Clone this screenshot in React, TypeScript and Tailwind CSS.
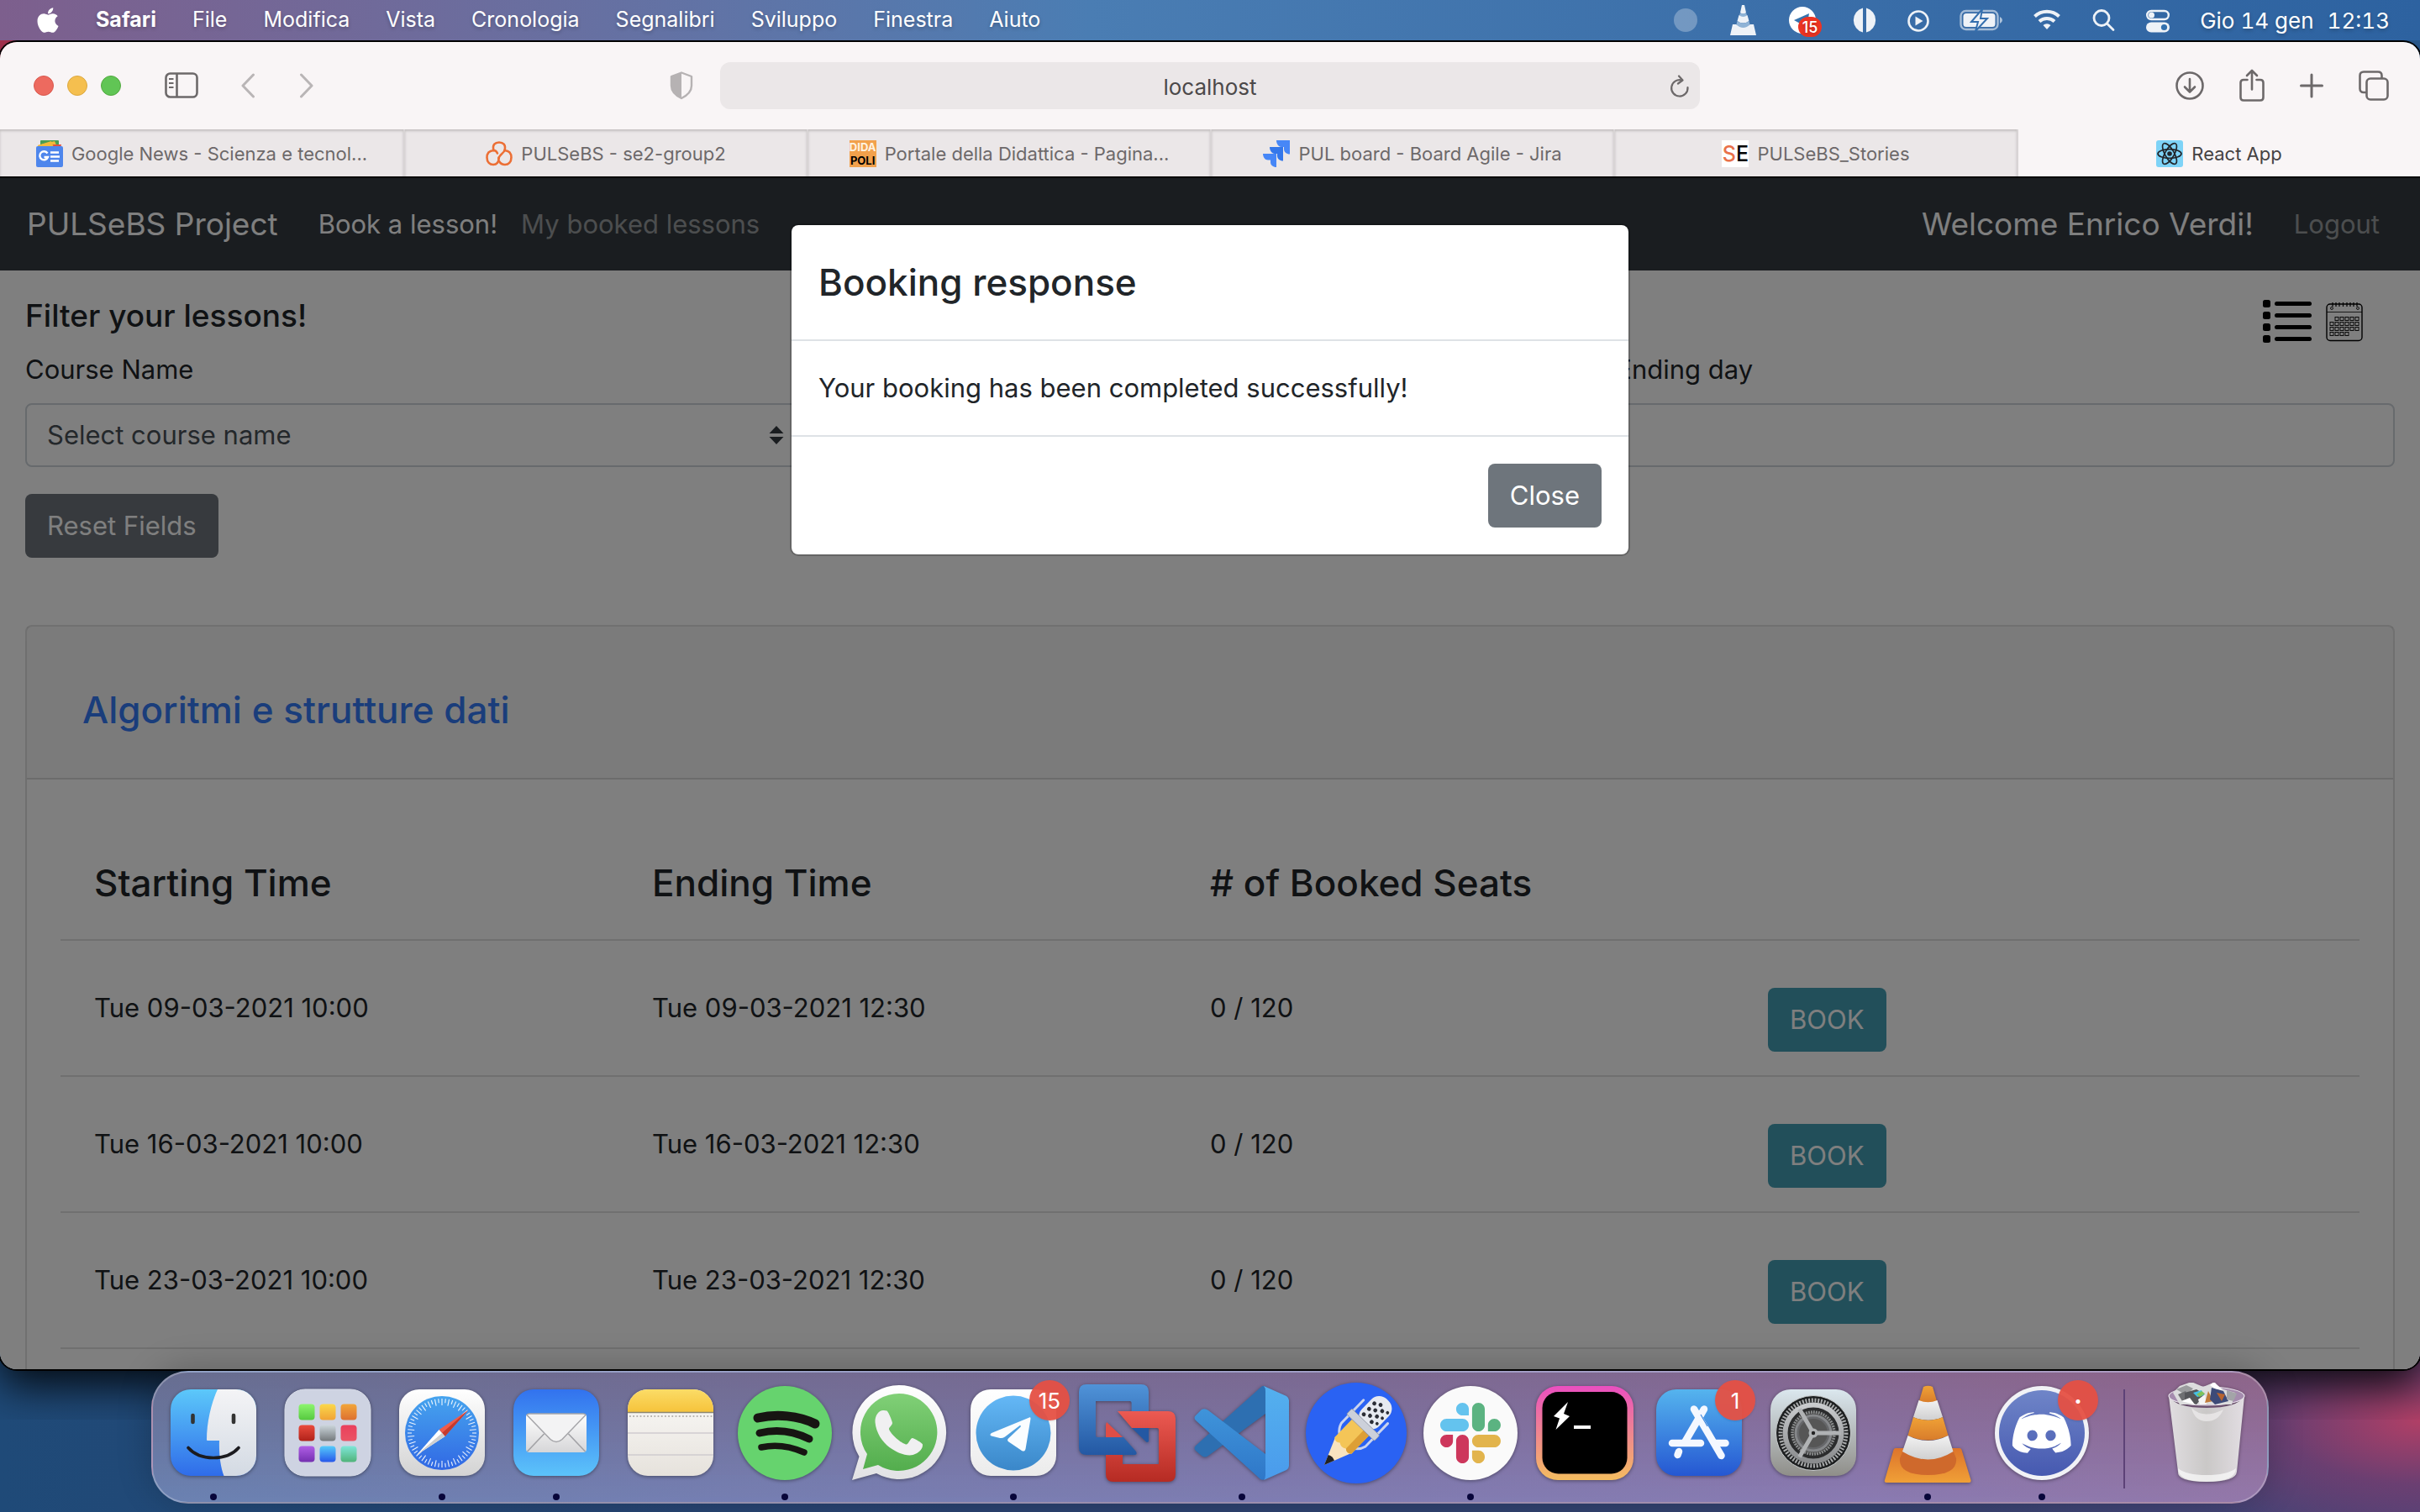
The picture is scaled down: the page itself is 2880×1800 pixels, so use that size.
import React from "react";
import { FaApple } from "react-icons/fa";

type Box = { className?: string };

/* ------------------------------------------------------------------ */
/* Menu bar                                                            */
/* ------------------------------------------------------------------ */

const MENU = ["File", "Modifica", "Vista", "Cronologia", "Segnalibri", "Sviluppo", "Finestra", "Aiuto"];

function StatusIcons() {
  return (
    <div className="flex items-center gap-9">
      <svg width="28" height="48" viewBox="0 0 28 48">
        <ellipse cx="14" cy="24" rx="14" ry="14" fill="#fff" opacity="0.28" />
      </svg>
      <svg width="36" height="48" viewBox="0 0 36 48">
        <path d="M17 6h3l2 9q-3.500 3-7 0z" fill="#eef2f7" />
        <path d="M15 15q3.500 3 7 0l1.500 5q-5 5-10 0z" fill="#8fb3d6" />
        <path d="M13.500 18q5 4 10 0l2 7q-7 5-14 0z" fill="#eef2f7" />
        <path d="M11.500 25q7 5 14 0l1.500 6q-8.500 6-17 0z" fill="#8fb3d6" />
        <path d="M6 29h4q8.500 8 17 0h4l3 13H3z" fill="#eef2f7" />
      </svg>
      <span className="relative flex">
        <svg width="40" height="48" viewBox="0 0 40 48">
          <circle cx="17" cy="24" r="16" fill="#fff" />
          <path d="M7 24l18-8-3 18-6-5z" fill="#3573ae" />
        </svg>
        <span className="absolute top-5 left-3 flex h-6 w-7 items-center justify-center rounded-full bg-[#ee3423] text-[18px] font-medium">15</span>
      </span>
      <svg width="30" height="48" viewBox="0 0 30 48">
        <path d="M13 9.500a15 15 0 0 0 0 29zM17 9.500a15 15 0 0 1 0 29z" fill="#eef2f7" />
      </svg>
      <svg width="26" height="48" viewBox="0 0 26 48">
        <circle cx="13" cy="25" r="11.500" fill="none" stroke="#eef2f7" strokeWidth="2.600" />
        <path d="M9.500 19.500v11l9-5.500z" fill="#eef2f7" />
      </svg>
      <svg width="52" height="48" viewBox="0 0 52 48">
        <rect x="1.500" y="13" width="44" height="22" rx="6" fill="none" stroke="#fff" strokeOpacity="0.55" strokeWidth="2.400" />
        <path d="M48 20q3 1.500 3 4t-3 4z" fill="#fff" opacity="0.6" />
        <rect x="4.500" y="16" width="38" height="16" rx="3.500" fill="#eef2f7" />
        <path d="M27 11L14 26h8l-3 11 14-15h-8z" fill="#eef2f7" stroke="#346fae" strokeWidth="2" />
      </svg>
      <svg width="32" height="48" viewBox="0 0 32 48" fill="none" stroke="#eef2f7" strokeWidth="4">
        <path d="M1.500 19.500a21 21 0 0 1 29 0" />
        <path d="M7 25.500a13 13 0 0 1 18 0" />
        <path d="M16 35l-4.500-5a6.500 6.500 0 0 1 9 0z" fill="#eef2f7" stroke="none" />
      </svg>
      <svg width="30" height="48" viewBox="0 0 30 48" fill="none" stroke="#eef2f7" strokeWidth="2.800" strokeLinecap="round">
        <circle cx="13" cy="21.500" r="9" />
        <path d="M20 28.500l7 7" />
      </svg>
      <svg width="28" height="48" viewBox="0 0 28 48">
        <rect x="1.200" y="13" width="25.600" height="10" rx="5" fill="none" stroke="#eef2f7" strokeWidth="2.400" />
        <circle cx="6.500" cy="18" r="3.500" fill="#eef2f7" />
        <rect x="0" y="26.500" width="28" height="12" rx="6" fill="#eef2f7" />
        <circle cx="21.500" cy="32.500" r="3.600" fill="#3270ae" />
      </svg>
    </div>
  );
}

function MenuBar() {
  return (
    <header className="flex h-12 shrink-0 items-center bg-linear-to-r from-[#7d5f8d] via-[#4a7db3] via-45% to-[#2d62a0] pr-9 pl-10 text-[25px] text-white [text-shadow:0_2px_4px_rgba(0,0,0,0.25)]">
      <FaApple size={34} className="mr-10" />
      <nav className="flex items-center gap-[43px]">
        <b className="font-bold">Safari</b>
        {MENU.map((m) => (
          <span key={m}>{m}</span>
        ))}
      </nav>
      <div className="ml-auto flex items-center gap-9">
        <StatusIcons />
        <span className="flex gap-4 text-[26px] tabular-nums">
          <span>Gio 14 gen</span>
          <span>12:13</span>
        </span>
      </div>
    </header>
  );
}

/* ------------------------------------------------------------------ */
/* Browser chrome                                                      */
/* ------------------------------------------------------------------ */

function Toolbar() {
  return (
    <div className="grid h-[104px] shrink-0 grid-cols-[1fr_1166px_1fr] items-center bg-[#f9f5f6] text-[#6d696a]">
      <div className="flex items-center pr-8 pl-10">
        <div className="flex gap-4">
          <button aria-label="Chiudi" className="size-6 rounded-full border border-[#d9584e] bg-[#ed6a5f]" />
          <button aria-label="Riduci" className="size-6 rounded-full border border-[#dca83f] bg-[#f5bf4f]" />
          <button aria-label="Ingrandisci" className="size-6 rounded-full border border-[#52a93f] bg-[#61c555]" />
        </div>
        <button aria-label="Barra laterale" className="ml-[52px]">
          <svg width="40" height="32" viewBox="0 0 40 32" fill="none" stroke="currentColor" strokeWidth="2.600">
            <rect x="1.500" y="1.500" width="37" height="28" rx="5" />
            <path d="M14.500 1.500v28" />
            <path d="M5 8h5.500M5 13h5.500M5 18h5.500" strokeWidth="2" />
          </svg>
        </button>
        <button aria-label="Indietro" className="ml-[50px] text-[#b9b5b6]">
          <svg width="18" height="30" viewBox="0 0 18 30" fill="none" stroke="currentColor" strokeWidth="3" strokeLinecap="round" strokeLinejoin="round">
            <path d="M15.500 2L3 15l12.500 13" />
          </svg>
        </button>
        <button aria-label="Avanti" className="ml-[52px] text-[#b9b5b6]">
          <svg width="18" height="30" viewBox="0 0 18 30" fill="none" stroke="currentColor" strokeWidth="3" strokeLinecap="round" strokeLinejoin="round">
            <path d="M2.500 2L15 15 2.500 28" />
          </svg>
        </button>
        <button aria-label="Privacy" className="ml-auto text-[#b6b2b3]">
          <svg width="28" height="34" viewBox="0 0 28 34">
            <path d="M14 1.500L26 6v11c0 7-5 11.500-12 15C7 28.500 2 24 2 17V6z" fill="none" stroke="currentColor" strokeWidth="2.400" strokeLinejoin="round" />
            <path d="M14 1.500v30.500C7 28.500 2 24 2 17V6z" fill="currentColor" />
          </svg>
        </button>
      </div>
      <div className="flex h-14 items-center rounded-xl bg-[#ebe7e8] pt-0.5 pr-3 pl-9">
        <input aria-label="Indirizzo" defaultValue="localhost" className="w-full bg-transparent text-center text-[26px] text-[#4c494a] outline-none" />
        <button aria-label="Ricarica">
          <svg width="24" height="28" viewBox="0 0 24 28" fill="none" stroke="currentColor" strokeWidth="2.200" strokeLinecap="round" strokeLinejoin="round">
            <path d="M21.500 15a9.700 9.700 0 1 1-7-8.500" />
            <path d="M11 1.500l4.500 5-5.500 4" />
          </svg>
        </button>
      </div>
      <div className="flex items-center justify-end gap-[42px] pr-[37px]">
        <button aria-label="Download">
          <svg width="34" height="36" viewBox="0 0 34 36" fill="none" stroke="currentColor" strokeWidth="2.600" strokeLinecap="round" strokeLinejoin="round">
            <circle cx="17" cy="18" r="15.500" />
            <path d="M17 10v15M11 19.500l6 6 6-6" />
          </svg>
        </button>
        <button aria-label="Condividi">
          <svg width="30" height="40" viewBox="0 0 30 40" fill="none" stroke="currentColor" strokeWidth="2.600" strokeLinecap="round" strokeLinejoin="round">
            <path d="M9.500 13H5q-3.500 0-3.500 3.500V34q0 3.500 3.500 3.500h20q3.500 0 3.500-3.500V16.500q0-3.500-3.500-3.500h-4.500" />
            <path d="M15 24.500V2.500M9 8l6-6 6 6" />
          </svg>
        </button>
        <button aria-label="Nuovo pannello">
          <svg width="28" height="30" viewBox="0 0 28 30" fill="none" stroke="currentColor" strokeWidth="3" strokeLinecap="round">
            <path d="M14 2v26M1.500 15h25" />
          </svg>
        </button>
        <button aria-label="Panoramica pannelli">
          <svg width="36" height="36" viewBox="0 0 36 36" fill="none" stroke="currentColor" strokeWidth="2.600">
            <path d="M9.500 26H6q-4.500 0-4.500-4.500V6Q1.500 1.500 6 1.500h17q4.500 0 4.500 4.500v3" />
            <rect x="9.500" y="9.500" width="25" height="25" rx="4.500" />
          </svg>
        </button>
      </div>
    </div>
  );
}

function TabIcon({ kind }: { kind: string }) {
  if (kind === "news")
    return (
      <svg width="32" height="32" viewBox="0 0 32 32">
        <rect x="5" y="0" width="22" height="12" rx="1" fill="#4a9e54" />
        <path d="M2 6l20-5 4 9H2z" fill="#f3b93b" />
        <path d="M18 5l12 0-2 8H18z" fill="#e0503e" />
        <path d="M18 1L2 6v5h20z" fill="#f3b93b" />
        <rect x="0" y="7" width="32" height="25" rx="2" fill="#4e86ec" />
        <path d="M13.500 15.500a5 5 0 1 0 .5 4.500h-4.500" fill="none" stroke="#fff" strokeWidth="2.400" />
        <path d="M17 14.500h10M17 19.500h11M17 24.500h10" stroke="#fff" strokeWidth="2.600" />
      </svg>
    );
  if (kind === "knot")
    return (
      <svg width="32" height="32" viewBox="0 0 32 32" fill="none" stroke="#ec6f35" strokeWidth="2.600" strokeLinecap="round">
        <path d="M9.500 12C7.500 5 11.500 2.500 16 2.500S24.500 5 22.500 12C21.500 15.500 16 17 15.500 22" />
        <path d="M14 15.500C13 13 11.500 12 9.500 12 4 12.500 1.500 16 1.500 20.500 1.500 26 5 29 9 29s7-3 6.500-8.500" />
        <path d="M22.500 12c5.500.5 8 4 8 8.500 0 5.500-3.500 8.500-7.500 8.500-3.500 0-5.500-1.500-7-4" />
      </svg>
    );
  if (kind === "dida")
    return (
      <span className="flex size-8 flex-col items-center justify-center overflow-hidden bg-[#f2a14c] text-[13px] leading-4 font-bold">
        <span className="text-[#fff3e2]">DIDA</span>
        <span className="text-black">POLI</span>
      </span>
    );
  if (kind === "jira")
    return (
      <svg width="32" height="32" viewBox="0 0 32 32">
        <path d="M16 0h16v16.500c-4 0-7-2.500-7-6V8h-3c-3.500 0-6-4-6-8z" fill="#4787f7" />
        <path d="M8 8h16v16.500c-4 0-7-2.500-7-6V16h-3c-3.500 0-6-4-6-8z" fill="#3477ea" />
        <path d="M0 16h16v16c-4 0-7-2.500-7-6v-2.500H6c-3.500 0-6-3.500-6-7.500z" fill="#4787f7" />
      </svg>
    );
  if (kind === "se")
    return (
      <span className="flex size-8 items-center justify-center overflow-hidden bg-white text-[25px] leading-8 font-medium">
        <span className="text-[#e9714b]">S</span>
        <span className="text-black">E</span>
      </span>
    );
  return (
    <svg width="32" height="32" viewBox="0 0 32 32">
      <rect width="32" height="32" rx="3" fill="#7ed3f7" />
      <g fill="none" stroke="#22252a" strokeWidth="1.700">
        <ellipse cx="16" cy="16" rx="14" ry="5.400" />
        <ellipse cx="16" cy="16" rx="14" ry="5.400" transform="rotate(60 16 16)" />
        <ellipse cx="16" cy="16" rx="14" ry="5.400" transform="rotate(120 16 16)" />
      </g>
      <circle cx="16" cy="16" r="2.800" fill="#22252a" />
    </svg>
  );
}

const TABS = [
  { icon: "news", title: "Google News - Scienza e tecnol..." },
  { icon: "knot", title: "PULSeBS - se2-group2" },
  { icon: "dida", title: "Portale della Didattica - Pagina..." },
  { icon: "jira", title: "PUL board - Board Agile - Jira" },
  { icon: "se", title: "PULSeBS_Stories" },
  { icon: "react", title: "React App", active: true },
];

function TabBar() {
  return (
    <div className="grid h-14 shrink-0 grid-cols-6 text-[22px]">
      {TABS.map((t) => (
        <button
          key={t.title}
          className={
            t.active
              ? "flex items-center justify-center gap-2.5 border-l-2 border-[#d8d4d5] bg-[#f9f5f6] pt-0.5 whitespace-nowrap text-[#454243]"
              : "flex items-center justify-center gap-2.5 border-l-2 border-[#d8d4d5] bg-[#ebe7e8] pt-0.5 whitespace-nowrap text-[#6d696a] shadow-[inset_0_2px_3px_#c3bfc0] first:border-l-0"
          }
        >
          <TabIcon kind={t.icon} />
          <span>{t.title}</span>
        </button>
      ))}
    </div>
  );
}

/* ------------------------------------------------------------------ */
/* Web page                                                            */
/* ------------------------------------------------------------------ */

const LESSONS = [
  { start: "Tue 09-03-2021 10:00", end: "Tue 09-03-2021 12:30", seats: "0 / 120" },
  { start: "Tue 16-03-2021 10:00", end: "Tue 16-03-2021 12:30", seats: "0 / 120" },
  { start: "Tue 23-03-2021 10:00", end: "Tue 23-03-2021 12:30", seats: "0 / 120" },
];

function ListIcon({ className }: Box) {
  return (
    <svg className={className} width="60" height="54" viewBox="0 0 60 54">
      {[0, 14, 28, 42].map((y) => (
        <g key={y}>
          <rect x="1" y={y + 1} width="9" height="9" rx="2.500" />
          <rect x="15" y={y + 3} width="44" height="5" rx="2.500" />
        </g>
      ))}
    </svg>
  );
}

const CALENDAR_DAYS = [
  [1, 2, 3, 4, 5],
  [0, 1, 2, 3, 4, 5],
  [0, 1, 2, 3, 4, 5],
  [0, 1, 2, 3],
];

function CalendarIcon() {
  return (
    <svg width="44" height="50" viewBox="0 0 44 50" fill="none" stroke="#000">
      <rect x="1" y="4" width="42" height="43.500" rx="4" strokeWidth="1.400" />
      <path d="M1 13.500h42" strokeWidth="0.800" />
      <path d="M8 2v5M12 2v5M16 2v5M20.500 2v5M25 2v5M29 2v5M33 2v5M37 2v5" strokeWidth="1.200" />
      <circle cx="7" cy="9" r="1.500" strokeWidth="0.800" />
      <circle cx="38" cy="9" r="1.500" strokeWidth="0.800" />
      {CALENDAR_DAYS.map((row, r) =>
        row.map((c) => <rect key={r + "-" + c} x={5 + c * 6} y={19.500 + r * 6} width="4" height="4" strokeWidth="0.900" />)
      )}
    </svg>
  );
}

function Field({ id, label, children }: { id: string; label?: string; children: React.ReactNode }) {
  return (
    <div className="flex flex-col justify-end gap-4">
      {label && (
        <label htmlFor={id} className="leading-[48px]">
          {label}
        </label>
      )}
      {children}
    </div>
  );
}

function PageContent() {
  return (
    <div className="flex h-full flex-col bg-white">
      <nav className="flex h-[110px] shrink-0 items-center bg-[#343a40] px-8">
        <a href="#home" className="text-[37px] text-white">
          PULSeBS Project
        </a>
        <a href="#book" className="ml-12 text-white">
          Book a lesson!
        </a>
        <a href="#booked" className="ml-7 text-white/50">
          My booked lessons
        </a>
        <span className="ml-auto text-[37px] text-white">Welcome Enrico Verdi!</span>
        <a href="#logout" className="mr-4 ml-12 text-white/50">
          Logout
        </a>
      </nav>
      <main className="flex flex-1 flex-col px-[30px] pt-[30px]">
        <div className="flex h-16 items-start justify-between">
          <h5 className="text-[37px] leading-[48px] font-medium">Filter your lessons!</h5>
          <div className="flex items-center gap-4 pt-1 pr-[38px]">
            <button aria-label="Lista">
              <ListIcon />
            </button>
            <button aria-label="Calendario">
              <CalendarIcon />
            </button>
          </div>
        </div>
        <form className="flex flex-col items-start gap-8">
          <div className="grid w-full grid-cols-3 gap-5">
            <Field id="course" label="Course Name">
              <div className="relative">
                <select id="course" className="h-[76px] w-full appearance-none rounded-lg border-2 border-[#ced4da] bg-white px-6 text-[#495057]">
                  <option>Select course name</option>
                </select>
                <svg className="pointer-events-none absolute top-[27px] right-6" width="18" height="22" viewBox="0 0 18 22" fill="#343a40">
                  <path d="M9 0l8.500 9H.5zM9 22l8.500-9H.5z" />
                </svg>
              </div>
            </Field>
            <Field id="from">
              <input id="from" type="text" aria-label="From day" className="h-[76px] rounded-lg border-2 border-[#ced4da] bg-white px-6" />
            </Field>
            <Field id="to" label="Ending day">
              <input id="to" type="text" className="h-[76px] rounded-lg border-2 border-[#ced4da] bg-white px-6" />
            </Field>
          </div>
          <button type="button" className="h-[76px] rounded-lg bg-[#6e757c] px-[26px] text-white">
            Reset Fields
          </button>
        </form>
        <section className="mt-20 flex flex-1 flex-col rounded-t-lg border-2 border-b-0 border-black/12">
          <div className="border-b-2 border-black/12 bg-black/3 pt-[70px] pr-16 pb-[52px] pl-[66px]">
            <a href="#course" className="block text-[44px] leading-[58px] font-medium text-[#347bf6]">
              Algoritmi e strutture dati
            </a>
          </div>
          <div className="px-10">
            <table className="block">
              <thead className="block">
                <tr className="grid grid-cols-4 border-b-2 border-black/12 px-10 pt-[94px] pb-[38px] text-left text-[44px] leading-[58px]">
                  <th className="font-medium">Starting Time</th>
                  <th className="font-medium">Ending Time</th>
                  <th className="font-medium"># of Booked Seats</th>
                  <th />
                </tr>
              </thead>
              <tbody className="block">
                {LESSONS.map((l) => (
                  <tr key={l.start} className="grid h-[162px] grid-cols-4 items-center border-b-2 border-black/12 px-10">
                    <td>{l.start}</td>
                    <td>{l.end}</td>
                    <td>{l.seats}</td>
                    <td className="pt-7">
                      <button className="h-[76px] rounded-lg bg-[#449fb4] px-[26px] text-white">BOOK</button>
                    </td>
                  </tr>
                ))}
              </tbody>
            </table>
          </div>
        </section>
      </main>
    </div>
  );
}

function BookingDialog() {
  return (
    <div className="absolute inset-0 flex items-start justify-center bg-black/50 pt-[54px]">
      <div role="dialog" aria-labelledby="dialog-title" className="w-[1000px] rounded-[10px] border-2 border-black/20 bg-white bg-clip-padding">
        <div className="border-b-2 border-[#dee2e6] px-8 py-8">
          <h4 id="dialog-title" className="text-[44px] leading-[72px] font-medium">
            Booking response
          </h4>
        </div>
        <p className="border-b-2 border-[#dee2e6] px-8 py-8 leading-[48px]">Your booking has been completed successfully!</p>
        <div className="flex justify-end p-8">
          <button className="h-[76px] rounded-lg bg-[#6e757c] px-[26px] text-white">Close</button>
        </div>
      </div>
    </div>
  );
}

/* ------------------------------------------------------------------ */
/* Dock                                                                */
/* ------------------------------------------------------------------ */

function Gradient({ id, from, to }: { id: string; from: string; to: string }) {
  return (
    <linearGradient id={id} x1="0" y1="0" x2="0" y2="1">
      <stop offset="0" stopColor={from} />
      <stop offset="1" stopColor={to} />
    </linearGradient>
  );
}

function Canvas({ children }: { children: React.ReactNode }) {
  return (
    <svg width="120" height="120" viewBox="0 0 120 120" className="drop-shadow-[0_1px_2px_rgba(0,0,0,0.4)]">
      {children}
    </svg>
  );
}

function Finder() {
  return (
    <Canvas>
      <defs>
        <Gradient id="fn1" from="#5cc8fa" to="#2f6ce9" />
        <Gradient id="fn2" from="#f4f4f6" to="#d3dae3" />
        <clipPath id="fnc">
          <rect x="9" y="8" width="102" height="103" rx="24" />
        </clipPath>
      </defs>
      <g clipPath="url(#fnc)">
        <rect x="9" y="8" width="102" height="103" fill="url(#fn1)" />
        <path d="M65 8C57 25 52 48 52 68q0 1 1 1h14c-.5 15 1 30 5.500 42H112V8z" fill="url(#fn2)" />
      </g>
      <path d="M35.500 39v8M84 39v8" stroke="#333" strokeWidth="4.600" strokeLinecap="round" />
      <path d="M30 77.500c14 16 46 16 60 0" fill="none" stroke="#1b1b1f" strokeWidth="3.600" strokeLinecap="round" />
    </Canvas>
  );
}

const PADS = [
  ["#8df56f", "#56c93f"],
  ["#fbd84b", "#f0a336"],
  ["#f2a63a", "#dd7030"],
  ["#ea4b3c", "#b0221a"],
  ["#ccd6dc", "#74797c"],
  ["#ea3f5c", "#ea5465"],
  ["#b05fe6", "#7430b0"],
  ["#56cbfb", "#2757ea"],
  ["#7fe6d8", "#50b37a"],
];

function Launchpad() {
  return (
    <Canvas>
      <defs>
        {PADS.map((p, i) => (
          <Gradient key={i} id={"lp" + i} from={p[0]} to={p[1]} />
        ))}
      </defs>
      <rect x="9" y="8" width="102" height="103" rx="24" fill="#ced3e2" stroke="#dadeea" strokeWidth="1" />
      {PADS.map((_, i) => (
        <rect key={i} x={25.500 + (i % 3) * 25} y={25.500 + Math.floor(i / 3) * 25} width="19" height="19" rx="4" fill={"url(#lp" + i + ")"} />
      ))}
    </Canvas>
  );
}

function SafariIcon() {
  return (
    <Canvas>
      <defs>
        <Gradient id="sf1" from="#ffffff" to="#d3d3d3" />
        <Gradient id="sf2" from="#46a4ee" to="#3168e4" />
      </defs>
      <rect x="9" y="8" width="102" height="103" rx="24" fill="url(#sf1)" />
      <circle cx="60" cy="60" r="44" fill="url(#sf2)" />
      {Array.from({ length: 60 }, (_, i) => (
        <path key={i} d={i % 2 ? "M60 19v5" : "M60 19v8"} stroke="#fff" strokeWidth="1.100" opacity="0.9" transform={"rotate(" + i * 6 + " 60 60)"} />
      ))}
      <path d="M91 33L56.500 56l7 8z" fill="#ee5c4c" />
      <path d="M91 33L60 60l3.500 4z" fill="#c43a2e" />
      <path d="M30 86l26.500-30 7 8z" fill="#fff" />
      <path d="M30 86l30-26 3.500 4z" fill="#cfcfcf" />
    </Canvas>
  );
}

function MailIcon() {
  return (
    <Canvas>
      <defs>
        <Gradient id="ml1" from="#3272ee" to="#5cc3fa" />
        <Gradient id="ml2" from="#ffffff" to="#d6d6d8" />
      </defs>
      <rect x="9" y="8" width="102" height="103" rx="24" fill="url(#ml1)" />
      <rect x="24" y="37" width="72" height="46" rx="4" fill="url(#ml2)" />
      <path d="M25.500 82l20-21M94.500 82l-20-21" stroke="#a2a2a6" strokeWidth="1.600" />
      <path d="M25 38.500l28 29q7 6 14 0l28-29q-1-1.500-3-1.500H28q-2 0-3 1.500z" fill="#f3f3f4" stroke="#a5a5a9" strokeWidth="1.500" />
    </Canvas>
  );
}

function NotesIcon() {
  return (
    <Canvas>
      <defs>
        <Gradient id="nt1" from="#fbdc67" to="#f6c33b" />
        <Gradient id="nt2" from="#fbfaf8" to="#e6e2dc" />
        <clipPath id="ntc">
          <rect x="9" y="8" width="102" height="103" rx="24" />
        </clipPath>
      </defs>
      <g clipPath="url(#ntc)">
        <rect x="9" y="8" width="102" height="103" fill="url(#nt2)" />
        <rect x="9" y="8" width="102" height="27" fill="url(#nt1)" />
        <path d="M9 35.500h102" stroke="#8d8672" strokeWidth="1.400" />
        <path d="M11 40h100" stroke="#b8b5b0" strokeWidth="1.800" strokeDasharray="1.800 2.400" />
        <path d="M9 60h102M9 86h102" stroke="#cfccd0" strokeWidth="1.500" />
      </g>
    </Canvas>
  );
}

function SpotifyIcon() {
  return (
    <Canvas>
      <circle cx="60" cy="60" r="56" fill="#66d36e" />
      <g fill="none" stroke="#171512" strokeLinecap="round">
        <path d="M28 42c22-5 48-3 68 7" strokeWidth="11" />
        <path d="M30 60c20-5 41-2 59 7" strokeWidth="9" />
        <path d="M32 77c18-4 35-1 51 6" strokeWidth="7.500" />
      </g>
    </Canvas>
  );
}

function WhatsAppIcon() {
  return (
    <Canvas>
      <defs>
        <Gradient id="wa1" from="#ffffff" to="#e1e1e4" />
        <Gradient id="wa2" from="#81d077" to="#53ad4d" />
      </defs>
      <path d="M60 3a56 56 0 1 1-27 105L4 116l8.500-28A56 56 0 0 1 60 3z" fill="url(#wa1)" />
      <path d="M60 13a46 46 0 1 1-25 85L17 103l5-18A46 46 0 0 1 60 13z" fill="url(#wa2)" />
      <path d="M42 33c-5-1-11 5-10.500 14 1 13 9 24 17 30s20 11 28 9c7-2 12-7 11.500-12.500-.5-2-9-6.500-12-7.500-2-.5-5 7-7 7.500-3 .5-17-9-21-18-.5-2 4-5 4-7.500-.5-3-4.500-13-6.500-14.500z" fill="#f0f0f1" />
    </Canvas>
  );
}

function TelegramIcon() {
  return (
    <Canvas>
      <defs>
        <Gradient id="tg1" from="#ffffff" to="#ebebeb" />
        <Gradient id="tg2" from="#64b8f6" to="#3a87c9" />
      </defs>
      <rect x="9" y="8" width="102" height="103" rx="24" fill="url(#tg1)" />
      <circle cx="60" cy="60" r="44.500" fill="url(#tg2)" />
      <path d="M79 41.500L34 60c-2 1-2 3 0 3.500l10 2.500q3 .5 6-1.500L67 51.500c1.500-1 2.500 0 1.500 1.200L54 66.500c-1.500 1.500-1 3 .5 4L70 81c2 1.200 4 .5 4.500-2L80.500 43c0-1.500-.5-2-1.500-1.500z" fill="#fafdff" />
    </Canvas>
  );
}

function FusionIcon() {
  return (
    <Canvas>
      <defs>
        <Gradient id="vm1" from="#5093d8" to="#2358a3" />
        <Gradient id="vm2" from="#ec5a52" to="#b62b23" />
      </defs>
      <path d="M48 34h60q9 0 9 9v66q0 9-9 9H43q-9 0-9-9V80h20v17h43V56q0-2-2-2H65z" fill="url(#vm2)" />
      <path d="M35 47l20 19v16H34V50z" fill="#e04e47" />
      <path d="M11 2h65q9 0 9 9v23H64.600V24q0-2-2-2H22v41q0 2 2 2h31l15 17q2 4-2 4H11q-9 0-9-9V11q0-9 9-9z" fill="url(#vm1)" />
      <path d="M65 54h20v16q-2 2-3.500 0z" fill="#2358a3" />
    </Canvas>
  );
}

function CodeIcon() {
  return (
    <Canvas>
      <defs>
        <Gradient id="vs1" from="#54b0ee" to="#4a9bec" />
        <Gradient id="vs2" from="#3f94da" to="#2f77c8" />
      </defs>
      <path d="M83 5q2-2 5 0v32L20 87q-4 3-8 0l-7-6q-3-3 0-6z" fill="#2d6fb1" />
      <path d="M12 32q4-2 8 1l68 52v29q-3 3-6 1L5 45q-3-3 0-6z" fill="url(#vs2)" />
      <path d="M86 4l27 12q3 2 3 5v78q0 3-3 5l-27 12q2-2 2-6V10q0-4-2-6z" fill="url(#vs1)" />
    </Canvas>
  );
}

function NotabilityIcon() {
  return (
    <Canvas>
      <circle cx="60" cy="60" r="60" fill="#2a62f3" />
      <g transform="translate(22 98) rotate(-46)">
        <path d="M88-20H50q-14 4-14 20t14 20h38" fill="none" stroke="#c9d3ee" strokeWidth="3" strokeLinecap="round" />
        <path d="M0 0l34-14v28z" fill="#f8e3bf" />
        <path d="M0 0l12-5q3 5 0 10z" fill="#222" />
        <path d="M32-14h36v28H32q-4-5 0-9-4-5 0-10-4-4 0-9z" fill="#f4c557" />
        <path d="M32 5h36v9H32q-4-5 0-9z" fill="#dd9f36" />
        <rect x="66" y="-14" width="42" height="29" rx="13" fill="#e6e9f0" />
        {[76, 85, 94].map((x) => (
          <g key={x} fill="#2b2d36">
            <circle cx={x} cy="-8" r="2.400" />
            <circle cx={x + 4} cy="-1.500" r="2.400" />
            <circle cx={x} cy="5" r="2.400" />
            <circle cx={x + 3} cy="11" r="1.900" />
          </g>
        ))}
        <rect x="62" y="-23" width="9" height="46" rx="1.500" fill="#ccd0da" stroke="#8e94a3" strokeWidth="0.800" />
      </g>
    </Canvas>
  );
}

function SlackIcon() {
  const dot = "M25.800 77.600c0 7.100-5.800 12.900-12.900 12.900S0 84.700 0 77.600s5.800-12.900 12.900-12.900h12.900zM32.300 77.600c0-7.100 5.800-12.900 12.900-12.900s12.900 5.800 12.900 12.900v32.300c0 7.100-5.800 12.900-12.900 12.900s-12.900-5.800-12.900-12.900z";
  return (
    <Canvas>
      <circle cx="60" cy="60" r="56" fill="#fafafa" />
      <g transform="translate(24 24) scale(0.586)">
        <path d={dot} fill="#cd375c" />
        <path d={dot} fill="#64c3ee" transform="rotate(90 61.400 61.400)" />
        <path d={dot} fill="#5bb381" transform="rotate(180 61.400 61.400)" />
        <path d={dot} fill="#e2b44c" transform="rotate(270 61.400 61.400)" />
      </g>
    </Canvas>
  );
}

function TerminalIcon() {
  return (
    <Canvas>
      <defs>
        <Gradient id="tm1" from="#ea4fc0" to="#f4bc5f" />
      </defs>
      <rect x="2" y="4" width="116" height="112" rx="26" fill="url(#tm1)" />
      <rect x="9.500" y="11" width="101" height="97.500" rx="19" fill="#000" />
      <path d="M40 23L23 40l7 2.500L25.500 56 42 40l-7-3z" fill="#fff" />
      <rect x="47" y="51" width="20" height="4" fill="#fff" />
    </Canvas>
  );
}

function AppStoreIcon() {
  return (
    <Canvas>
      <defs>
        <Gradient id="as1" from="#55b4ee" to="#2557d2" />
      </defs>
      <rect x="9" y="8" width="102" height="103" rx="24" fill="url(#as1)" />
      <g stroke="#f4f8ff" strokeWidth="8.500" strokeLinecap="round">
        <path d="M54 31.500L86.500 87" />
        <path d="M66 31.500L43 71" />
        <path d="M28 72h34" />
        <path d="M79 72h12.500" />
        <path d="M36 82l-1.500 4" />
      </g>
      <path d="M62 38l8 14" stroke="#3f87dd" strokeWidth="1.200" />
    </Canvas>
  );
}

function SettingsIcon() {
  return (
    <Canvas>
      <defs>
        <Gradient id="st1" from="#dbe7ee" to="#8f8e89" />
        <Gradient id="st2" from="#c9cbcd" to="#8a8c8e" />
      </defs>
      <rect x="9" y="8" width="102" height="103" rx="24" fill="url(#st1)" />
      <circle cx="60" cy="60" r="44.500" fill="#1d1f20" stroke="#c9cccd" strokeWidth="1" />
      <circle cx="60" cy="60" r="39" fill="none" stroke="#a9abac" strokeWidth="5" strokeDasharray="2 1.700" />
      <circle cx="60" cy="60" r="33.500" fill="#2b2c2d" stroke="url(#st2)" strokeWidth="6" />
      <circle cx="60" cy="60" r="25" fill="#444" stroke="#8c8e8f" strokeWidth="3.500" strokeDasharray="1.800 1.200" />
      <circle cx="60" cy="60" r="21" fill="#66676a" stroke="#85878a" strokeWidth="3" />
      <circle cx="60" cy="60" r="17" fill="#565656" />
      <path d="M60 60h33M60 60L43.500 31.500M60 60L43.500 88.500" stroke="#b0b2b4" strokeWidth="5" />
      <circle cx="60" cy="60" r="5.500" fill="#b0b2b4" />
      <circle cx="60" cy="60" r="2.200" fill="#222" />
    </Canvas>
  );
}

function VlcIcon() {
  return (
    <Canvas>
      <defs>
        <Gradient id="vl1" from="#dd742b" to="#f0a037" />
        <Gradient id="vl2" from="#f2f2f2" to="#cfcfd0" />
        <Gradient id="vl3" from="#f0a236" to="#d87c2b" />
      </defs>
      <path d="M22 78h76q2 0 2.500 2l11 36q.5 3-2 3H11q-3 0-2-3l10.500-36q.5-2 2.500-2z" fill="url(#vl1)" />
      <path d="M27 90q-2 20 33.500 20T94 90l-4-10H31z" fill="#cf692c" />
      <path d="M55 5q5.500-2.500 11 0l5 17q-10.500 4-21 0z" fill="url(#vl3)" />
      <path d="M49.500 21q11 4.500 22 0l6.500 20q-17.500 7.500-35 0z" fill="url(#vl2)" />
      <path d="M43 41q17.500 7.500 35 0l6.500 22q-24 11-48 0z" fill="url(#vl3)" />
      <path d="M36.500 63q24 12 48 0l6 19q-30 19-60.500 0z" fill="url(#vl2)" />
    </Canvas>
  );
}

function DiscordIcon() {
  return (
    <Canvas>
      <defs>
        <Gradient id="dc1" from="#6f85c8" to="#4659b0" />
      </defs>
      <circle cx="60" cy="60" r="56" fill="#f1f2f6" />
      <circle cx="60" cy="60" r="51" fill="url(#dc1)" />
      <g transform="translate(2 8) scale(4.800)" fill="#fff">
        <path d="M14.104 5.683h-.03l-.202.2c2.073.6 3.076 1.537 3.076 1.537-1.336-.668-2.540-1.002-3.744-1.137-.87-.135-1.740-.064-2.475 0h-.2c-.47 0-1.470.2-2.810.735-.467.203-.735.336-.735.336s1.002-1.002 3.210-1.537l-.135-.135s-1.672-.064-3.477 1.270c0 0-1.805 3.144-1.805 7.020 0 0 1 1.740 3.743 1.806 0 0 .4-.533.805-1.002-1.540-.468-2.140-1.404-2.140-1.404s.134.066.335.2h.06c.03 0 .044.015.06.03v.006c.016.016.03.03.06.03.33.136.66.27.93.4.466.202 1.065.403 1.800.536.93.135 1.996.2 3.210 0 .6-.135 1.200-.267 1.800-.535.39-.2.87-.4 1.397-.737 0 0-.6.936-2.205 1.404.33.466.795 1 .795 1 2.744-.06 3.810-1.800 3.870-1.726 0-3.870-1.815-7.020-1.815-7.020-1.635-1.214-3.165-1.260-3.435-1.260zm.168 4.413c.703 0 1.270.6 1.270 1.335 0 .74-.57 1.340-1.270 1.340-.7 0-1.270-.6-1.270-1.334.002-.74.573-1.338 1.270-1.338zm-4.543 0c.7 0 1.266.6 1.266 1.335 0 .74-.57 1.340-1.270 1.340-.7 0-1.270-.6-1.270-1.334 0-.74.57-1.338 1.270-1.338z" />
      </g>
    </Canvas>
  );
}

function TrashIcon() {
  return (
    <Canvas>
      <defs>
        <linearGradient id="tr1" x1="0" y1="0" x2="1" y2="0">
          <stop offset="0" stopColor="#e4e2e4" />
          <stop offset="0.500" stopColor="#cdccca" />
          <stop offset="1" stopColor="#e6e2e6" />
        </linearGradient>
      </defs>
      <ellipse cx="60" cy="16" rx="45" ry="11" fill="#a58cae" stroke="#e9e2ec" strokeWidth="1.200" />
      <path d="M20 12l8-8 14-5 14 6 12-5 12 8 14 4-4 14H28z" fill="#dcdcdd" />
      <path d="M24 8l12-5 8 4-8 8z" fill="#9b9c9e" />
      <path d="M26 14l9-4 4 9-8 3z" fill="#6e6f72" />
      <path d="M34 12l14-4 10 6-10 12-14-4z" fill="#55565a" />
      <path d="M44 12l10-3 3 6-8 2z" fill="#45bfe8" />
      <path d="M48 14l6-4 4 3-6 4z" fill="#7fc35a" />
      <path d="M50 20l8-6 2 12h-8z" fill="#f5f5f5" />
      <path d="M58 24l4-14 6 12z" fill="#c07a3b" />
      <path d="M66 6l14 4 6 12-16 4-6-6z" fill="#3d4a78" />
      <path d="M72 12l10 2-4 8z" fill="#b8642f" />
      <path d="M84 9l12 4-4 9-8-2z" fill="#a3a4a8" />
      <path d="M30 22l10-4 6 8zM64 3l5-4 10 10-9-2z" fill="#fff" />
      <path d="M15 16q8 14 45 14t45-14l-9 90q-1 12-36 12t-34-12z" fill="url(#tr1)" opacity="0.97" />
      <path d="M42 30q14 14 38 2-6 14-20 14T42 30z" fill="#efeeee" opacity="0.7" />
      <path d="M26 102q10 8 34 8t35-8q-1 16-35 16t-34-16z" fill="#fff" opacity="0.65" />
    </Canvas>
  );
}

const DOCK: { name: string; Icon: () => React.ReactElement; running?: boolean; badge?: string }[] = [
  { name: "Finder", Icon: Finder, running: true },
  { name: "Launchpad", Icon: Launchpad },
  { name: "Safari", Icon: SafariIcon, running: true },
  { name: "Mail", Icon: MailIcon, running: true },
  { name: "Note", Icon: NotesIcon },
  { name: "Spotify", Icon: SpotifyIcon, running: true },
  { name: "WhatsApp", Icon: WhatsAppIcon },
  { name: "Telegram", Icon: TelegramIcon, running: true, badge: "15" },
  { name: "VMware Fusion", Icon: FusionIcon },
  { name: "Visual Studio Code", Icon: CodeIcon, running: true },
  { name: "Notability", Icon: NotabilityIcon },
  { name: "Slack", Icon: SlackIcon, running: true },
  { name: "Hyper", Icon: TerminalIcon },
  { name: "App Store", Icon: AppStoreIcon, badge: "1" },
  { name: "Preferenze", Icon: SettingsIcon },
  { name: "VLC", Icon: VlcIcon, running: true },
  { name: "Discord", Icon: DiscordIcon, running: true, badge: "•" },
];

function Dock() {
  return (
    <footer className="relative z-10 mx-auto mt-0.5 mb-2.5 flex h-[158px] shrink-0 rounded-[44px] border-2 border-white/25 bg-[linear-gradient(to_bottom,rgba(110,80,100,0.35),rgba(120,140,200,0.3)),linear-gradient(to_right,#647da8,#7479a9_28%,#8276a9_55%,#9073a8_80%,#9f6f9d)] px-1 pt-3 shadow-[0_-4px_40px_rgba(0,0,0,0.22)]">
      {DOCK.map(({ name, Icon, running, badge }) => (
        <button key={name} aria-label={name} className="relative flex w-[136px] flex-col items-center gap-3">
          <Icon />
          {running && <span className="size-2 rounded-full bg-[#08063a]" />}
          {badge && (
            <span
              className={
                badge === "•"
                  ? "absolute -top-[3px] right-px flex size-12 items-center justify-center rounded-full bg-[#e55043]/95 text-[16px] text-white shadow"
                  : "absolute -top-[3px] right-px flex size-12 items-center justify-center rounded-full bg-[#e55043]/95 text-[26px] text-white shadow"
              }
            >
              {badge}
            </span>
          )}
        </button>
      ))}
      <span className="mx-[29px] mt-2 h-[118px] w-0.5 bg-[#5d4277]" />
      <button aria-label="Cestino" className="flex w-[136px] flex-col items-center">
        <TrashIcon />
      </button>
    </footer>
  );
}

/* ------------------------------------------------------------------ */

export default function App() {
  return (
    <div className="flex h-screen flex-col overflow-hidden bg-[radial-gradient(ellipse_330px_150px_at_100%_94%,#b03f66,rgba(125,60,110,0.65)_50%,transparent),linear-gradient(to_right,#1f4a78,#2a4270_40%,#34426f_75%,#4a4478)] font-['Inter',sans-serif] text-[31px] text-[#212529]">
      <MenuBar />
      <div className="flex min-h-0 flex-1 flex-col bg-[linear-gradient(to_right,#b03553,#3a6ea5_45%,#2c5f98)] [clip-path:inset(0_0_-60px_0)] bg-no-repeat [background-size:100%_60px]">
        <div className="mt-0.5 flex min-h-0 flex-1 flex-col overflow-hidden rounded-[20px] shadow-[0_0_0_2px_#000,0_20px_50px_rgba(0,0,0,0.85)]">
          <Toolbar />
          <TabBar />
          <div className="relative min-h-0 flex-1 overflow-hidden border-t-2 border-black">
            <PageContent />
            <BookingDialog />
          </div>
        </div>
      </div>
      <Dock />
    </div>
  );
}
